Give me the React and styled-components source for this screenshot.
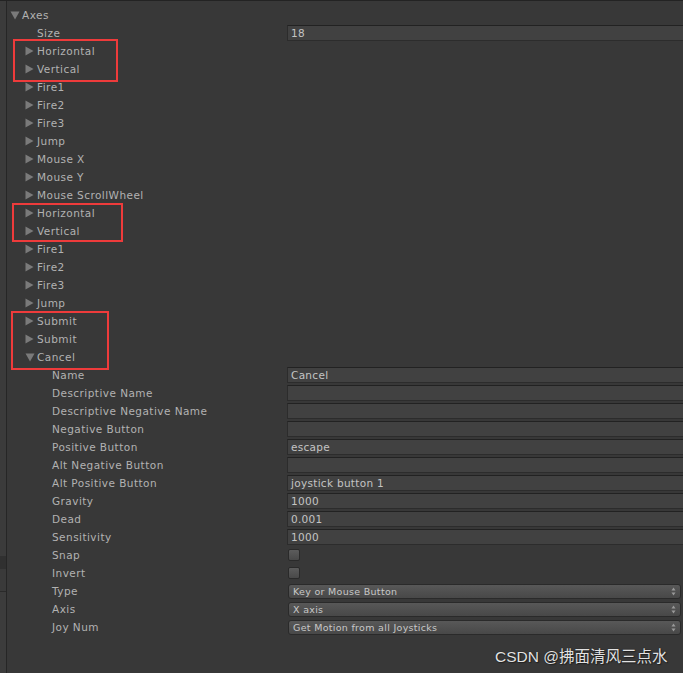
import React from "react";
import styled, { createGlobalStyle } from "styled-components";

const Global = createGlobalStyle`
  html, body { margin: 0; padding: 0; background: #383838; }
  body { font-family: "DejaVu Sans", "Liberation Sans", sans-serif; }
`;

const Page = styled.div`
  position: relative;
  width: 683px;
  height: 673px;
  overflow: hidden;
  background: #383838;
  border-top: 1px solid #232323;
  box-sizing: border-box;
  display: flex;
`;

const SideStrip = styled.div`
  width: 6px;
  flex: none;
  display: flex;
  flex-direction: column;
  background: #3b3b3b;
  border-right: 1px solid #262626;
`;

const StripPart = styled.div`
  height: ${(p) => p.$h}px;
  flex: ${(p) => (p.$grow ? 1 : "none")};
  background: ${(p) => p.$bg};
  border-bottom: ${(p) => (p.$line ? "1px solid #2a2a2a" : "none")};
`;

const Main = styled.div`
  flex: 1;
  padding-top: 5px;
  display: flex;
  flex-direction: column;
  min-width: 0;
`;

const Row = styled.div`
  height: 18px;
  display: flex;
  align-items: center;
`;

const Label = styled.div`
  width: 280px;
  flex: none;
  box-sizing: border-box;
  padding-left: ${(p) => 3 + 15 * p.$level}px;
  display: flex;
  align-items: center;
  color: #b2b2b2;
  font-size: 10.5px;
  letter-spacing: 0.45px;
  white-space: nowrap;
`;

const Arrow = styled.span`
  width: 12px;
  flex: none;
  display: flex;
  align-items: center;
  justify-content: flex-start;
  svg { display: block; }
`;

const Field = styled.div`
  flex: 1;
  height: 16px;
  box-sizing: border-box;
  background: #414141;
  border: 1px solid #2c2c2c;
  border-top-color: #222;
  border-right: none;
  color: #c4c4c4;
  font-size: 10.5px;
  letter-spacing: 0.3px;
  padding-left: 3px;
  display: flex;
  align-items: center;
  white-space: nowrap;
`;

const Check = styled.div`
  width: 12px;
  height: 12px;
  margin-left: 1px;
  box-sizing: border-box;
  border: 1px solid #2a2a2a;
  border-radius: 2px;
  background: linear-gradient(#5c5c5c, #494949);
`;

const Dropdown = styled.div`
  flex: 1;
  height: 15px;
  margin-left: 1px;
  margin-right: 2px;
  box-sizing: border-box;
  border: 1px solid #2a2a2a;
  border-radius: 3px;
  background: linear-gradient(#585858, #484848);
  color: #c8c8c8;
  font-size: 9.5px;
  letter-spacing: 0.3px;
  padding: 0 4px 0 4px;
  display: flex;
  align-items: center;
  justify-content: space-between;
  white-space: nowrap;
`;

const Updown = styled.svg`
  flex: none;
`;

const RedBox = styled.div`
  position: absolute;
  left: ${(p) => p.$x}px;
  top: ${(p) => p.$y}px;
  width: ${(p) => p.$w}px;
  height: ${(p) => p.$h}px;
  border: 2px solid #ee3b3b;
  box-sizing: border-box;
  pointer-events: none;
`;

const Watermark = styled.div`
  position: absolute;
  left: 495px;
  top: 643px;
  font-family: "Liberation Sans", "Noto Sans CJK SC", sans-serif;
  font-size: 15.5px;
  color: #e2e2e2;
  text-shadow: 0 0 1px #111, 1px 1px 1px #222;
  white-space: nowrap;
`;

const TriRight = () => (
  <svg width="9" height="10" viewBox="0 0 9 10">
    <polygon points="0.5,0.5 8.5,5 0.5,9.5" fill="#7a7a7a" />
  </svg>
);
const TriDown = () => (
  <svg width="10" height="9" viewBox="0 0 10 9">
    <polygon points="0.5,0.5 9.5,0.5 5,8.5" fill="#7a7a7a" />
  </svg>
);

const rows = [
  { label: "Axes", level: 0, fold: "open" },
  { label: "Size", level: 1, field: "18" },
  ...[
    "Horizontal", "Vertical", "Fire1", "Fire2", "Fire3", "Jump", "Mouse X", "Mouse Y",
    "Mouse ScrollWheel", "Horizontal", "Vertical", "Fire1", "Fire2", "Fire3", "Jump",
    "Submit", "Submit",
  ].map((l) => ({ label: l, level: 1, fold: "closed" })),
  { label: "Cancel", level: 1, fold: "open" },
  { label: "Name", level: 2, field: "Cancel" },
  { label: "Descriptive Name", level: 2, field: "" },
  { label: "Descriptive Negative Name", level: 2, field: "" },
  { label: "Negative Button", level: 2, field: "" },
  { label: "Positive Button", level: 2, field: "escape" },
  { label: "Alt Negative Button", level: 2, field: "" },
  { label: "Alt Positive Button", level: 2, field: "joystick button 1" },
  { label: "Gravity", level: 2, field: "1000" },
  { label: "Dead", level: 2, field: "0.001" },
  { label: "Sensitivity", level: 2, field: "1000" },
  { label: "Snap", level: 2, check: true },
  { label: "Invert", level: 2, check: true },
  { label: "Type", level: 2, drop: "Key or Mouse Button" },
  { label: "Axis", level: 2, drop: "X axis" },
  { label: "Joy Num", level: 2, drop: "Get Motion from all Joysticks" },
];

export default function App() {
  return (
    <>
      <Global />
      <Page>
        <SideStrip>
          <StripPart $h={555} $bg="#3b3b3b" />
          <StripPart $h={13} $bg="#303030" />
          <StripPart $h={22} $bg="#3a3a3a" $line />
          <StripPart $grow $bg="#3c3c3c" />
        </SideStrip>
        <Main>
          {rows.map((r, i) => (
            <Row key={i}>
              <Label $level={r.level}>
                <Arrow>
                  {r.fold === "open" && <TriDown />}
                  {r.fold === "closed" && <TriRight />}
                </Arrow>
                {r.label}
              </Label>
              {r.field !== undefined && <Field>{r.field}</Field>}
              {r.check && <Check />}
              {r.drop && (
                <Dropdown>
                  <span>{r.drop}</span>
                  <Updown width="5" height="9" viewBox="0 0 5 9">
                    <polygon points="2.5,0.5 4.5,3.5 0.5,3.5" fill="#9a9a9a" />
                    <polygon points="0.5,5.5 4.5,5.5 2.5,8.5" fill="#9a9a9a" />
                  </Updown>
                </Dropdown>
              )}
            </Row>
          ))}
        </Main>
        <RedBox $x={13} $y={38} $w={105} $h={43} />
        <RedBox $x={12} $y={202} $w={111} $h={39} />
        <RedBox $x={11} $y={310} $w={98} $h={59} />
        <Watermark>CSDN @拂面清风三点水</Watermark>
      </Page>
    </>
  );
}
